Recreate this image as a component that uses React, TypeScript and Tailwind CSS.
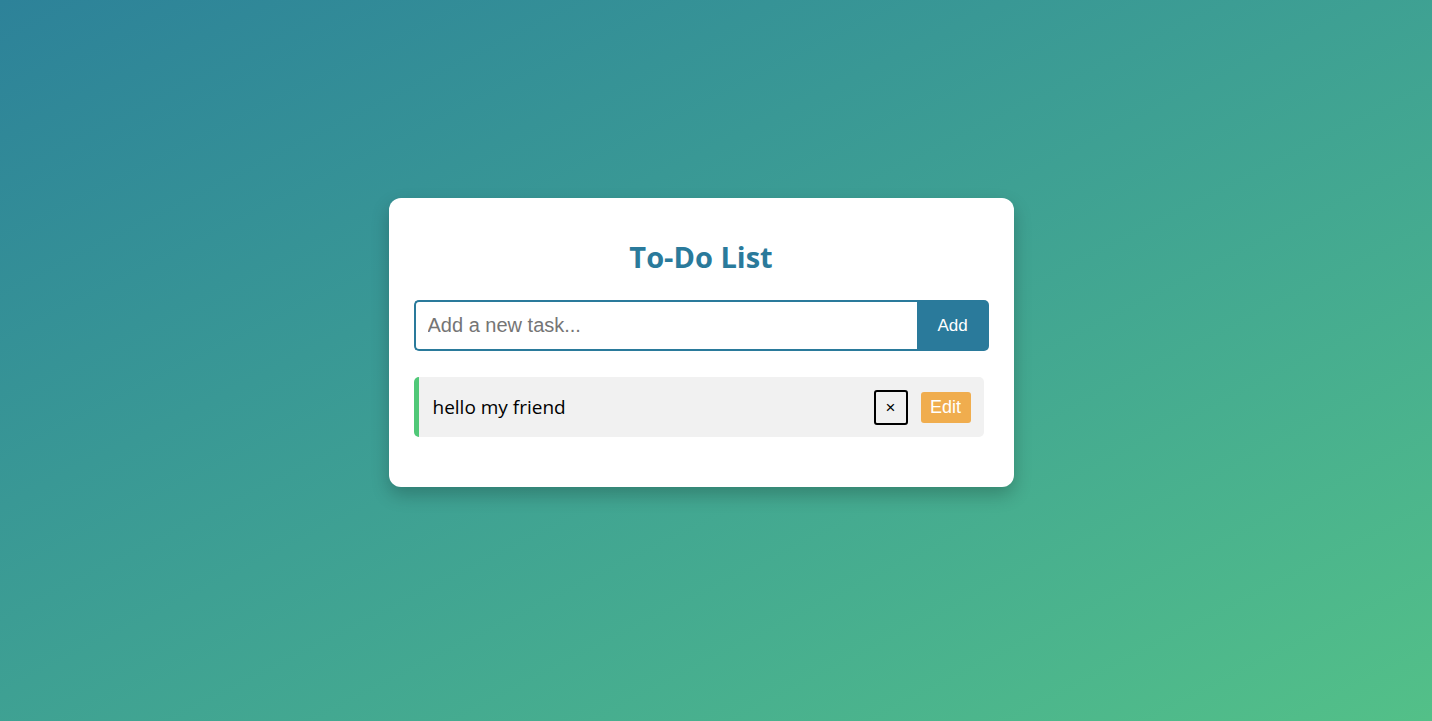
import { useState } from "react";

export default function App() {
  const [tasks] = useState(["hello my friend"]);

  return (
    <div className="min-h-screen w-full flex items-center justify-center bg-gradient-to-br from-[#2d8299] to-[#53c088] pr-[30px] pb-[36px]">
      <div className="w-[625px] bg-white rounded-xl shadow-[0_8px_18px_rgba(0,0,0,0.22)] px-[25px] pt-[40px] pb-[50px]">
        <h1 className="text-center text-[29px] leading-[38px] font-bold text-[#2a7a9b] font-['Open_Sans',sans-serif]">
          To-Do List
        </h1>

        <div className="flex mt-[24px] h-[51px]">
          <input
            className="flex-1 min-w-0 h-full border-2 border-r-0 border-[#2a7a9b] rounded-l-[5px] px-[12px] text-[20px] font-['Liberation_Sans',Arial,sans-serif] placeholder:text-[#757575] outline-none"
            placeholder="Add a new task..."
          />
          <button className="w-[72px] h-full bg-[#2a7a9b] text-white rounded-r-[5px] text-[17px] font-['Liberation_Sans',Arial,sans-serif]">
            Add
          </button>
        </div>

        <ul className="mt-[26px] mr-[5px]">
          {tasks.map((t) => (
            <li
              key={t}
              className="h-[60px] flex items-center bg-[#f1f1f1] border-l-[5px] border-[#50c878] rounded-[5px] pl-[14px] pr-[13px]"
            >
              <span className="flex-1 text-[19px] text-black font-['Open_Sans',sans-serif]">
                {t}
              </span>
              <button className="w-[34px] h-[35px] border-2 border-black rounded-[3px] text-[17px] leading-none font-['Liberation_Sans',Arial,sans-serif]">
                ×
              </button>
              <button className="ml-[13px] w-[50px] h-[31px] bg-[#f0ad4e] text-white rounded-[3px] text-[18px] font-['Liberation_Sans',Arial,sans-serif]">
                Edit
              </button>
            </li>
          ))}
        </ul>
      </div>
    </div>
  );
}
